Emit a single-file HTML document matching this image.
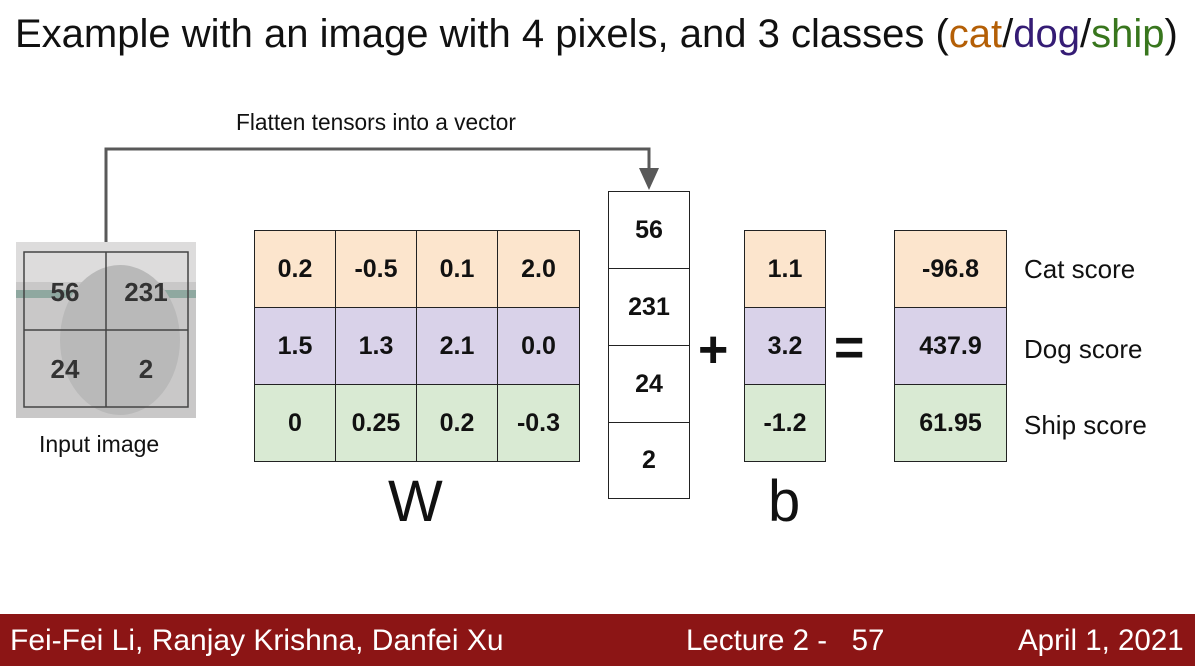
<!DOCTYPE html><html><head><style>
body{margin:0;width:1195px;height:666px;background:#fff;position:relative;overflow:hidden;font-family:"Liberation Sans",Arial,sans-serif}
.a{position:absolute;white-space:nowrap}
.c{position:absolute;box-sizing:border-box;border:1px solid #222;display:flex;align-items:center;justify-content:center;font-weight:bold;font-size:25px;color:#111}
.o{background:#fce5cd}.p{background:#d9d2e9}.g{background:#d9ead3}
</style></head><body>
<div class="a" style="left:15px;top:12px;font-size:40px;color:#111">Example with an image with 4 pixels, and 3 classes (<span style="color:#b45f06">cat</span>/<span style="color:#351c75">dog</span>/<span style="color:#38761d">ship</span>)</div>
<div class="a" style="left:236px;top:109px;font-size:22.7px;color:#111">Flatten tensors into a vector</div>
<svg class="a" style="left:0;top:0" width="1195" height="666">
<polyline points="106,242 106,149 649,149 649,172" fill="none" stroke="#595959" stroke-width="3"/>
<polygon points="639,168 659,168 649,190" fill="#595959"/>
<rect x="16" y="242" width="180" height="176" fill="#c9c8c8"/>
<rect x="16" y="242" width="180" height="40" fill="#dddcdc"/>
<rect x="16" y="290" width="180" height="8" fill="#8fa8a0"/>
<ellipse cx="120" cy="340" rx="60" ry="75" fill="#b9b9b9"/>
<rect x="24" y="252" width="164" height="155" fill="none" stroke="#444" stroke-width="1.5"/>
<line x1="106" y1="252" x2="106" y2="407" stroke="#444" stroke-width="1.5"/>
<line x1="24" y1="330" x2="188" y2="330" stroke="#444" stroke-width="1.5"/>
<g font-family="Liberation Sans" font-weight="bold" font-size="26" fill="#333" text-anchor="middle">
<text x="65" y="301">56</text><text x="146" y="301">231</text><text x="65" y="378">24</text><text x="146" y="378">2</text></g>
</svg>
<div class="a" style="left:39px;top:431px;font-size:23px;color:#111">Input image</div>
<div class="c o" style="left:254px;top:230px;width:82px;height:78px">0.2</div>
<div class="c o" style="left:335px;top:230px;width:82px;height:78px">-0.5</div>
<div class="c o" style="left:416px;top:230px;width:82px;height:78px">0.1</div>
<div class="c o" style="left:497px;top:230px;width:83px;height:78px">2.0</div>
<div class="c p" style="left:254px;top:307px;width:82px;height:78px">1.5</div>
<div class="c p" style="left:335px;top:307px;width:82px;height:78px">1.3</div>
<div class="c p" style="left:416px;top:307px;width:82px;height:78px">2.1</div>
<div class="c p" style="left:497px;top:307px;width:83px;height:78px">0.0</div>
<div class="c g" style="left:254px;top:384px;width:82px;height:78px">0</div>
<div class="c g" style="left:335px;top:384px;width:82px;height:78px">0.25</div>
<div class="c g" style="left:416px;top:384px;width:82px;height:78px">0.2</div>
<div class="c g" style="left:497px;top:384px;width:83px;height:78px">-0.3</div>
<div class="c" style="left:608px;top:191px;width:82px;height:78px">56</div>
<div class="c" style="left:608px;top:268px;width:82px;height:78px">231</div>
<div class="c" style="left:608px;top:345px;width:82px;height:78px">24</div>
<div class="c" style="left:608px;top:422px;width:82px;height:77px">2</div>
<div class="c o" style="left:744px;top:230px;width:82px;height:78px">1.1</div>
<div class="c p" style="left:744px;top:307px;width:82px;height:78px">3.2</div>
<div class="c g" style="left:744px;top:384px;width:82px;height:78px">-1.2</div>
<div class="c o" style="left:894px;top:230px;width:113px;height:78px">-96.8</div>
<div class="c p" style="left:894px;top:307px;width:113px;height:78px">437.9</div>
<div class="c g" style="left:894px;top:384px;width:113px;height:78px">61.95</div>
<div class="a" style="left:698px;top:320px;font-size:52px;font-weight:bold;color:#111">+</div>
<div class="a" style="left:834px;top:318px;font-size:52px;font-weight:bold;color:#111">=</div>
<div class="a" style="left:388px;top:468px;font-size:58px;color:#111">W</div>
<div class="a" style="left:768px;top:468px;font-size:58px;color:#111">b</div>
<div class="a" style="left:1024px;top:254px;font-size:26px;color:#111">Cat score</div>
<div class="a" style="left:1024px;top:334px;font-size:26px;color:#111">Dog score</div>
<div class="a" style="left:1024px;top:410px;font-size:26px;color:#111">Ship score</div>
<div class="a" style="left:0;top:614px;width:1195px;height:52px;background:#8c1515"></div>
<div class="a" style="left:10px;top:624px;font-size:30px;color:#fff">Fei-Fei Li, Ranjay Krishna, Danfei Xu</div>
<div class="a" style="left:686px;top:624px;font-size:29.5px;color:#fff;white-space:pre">Lecture 2 -   57</div>
<div class="a" style="left:1018px;top:624px;font-size:29.5px;color:#fff">April 1, 2021</div>
</body></html>
